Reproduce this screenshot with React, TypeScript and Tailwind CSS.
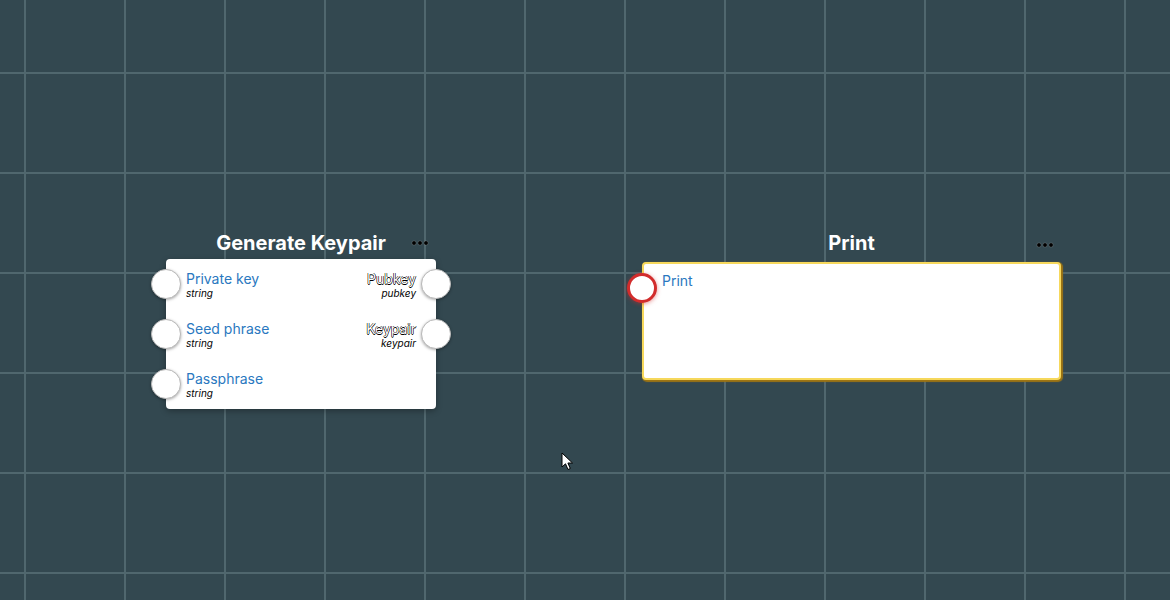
const grid =
  "bg-[#334850] [background-image:linear-gradient(to_right,#50676e_2px,transparent_2px),linear-gradient(to_bottom,#50676e_2px,transparent_2px)] [background-size:100px_100px] [background-position:24px_72px]";

const font = "font-['Inter','Liberation_Sans',sans-serif]";

type Port = { name: string; type?: string };

function Dots() {
  return (
    <div className="absolute right-2 top-1/2 flex -translate-y-1/2 gap-[2px]">
      {[0, 1, 2].map((i) => (
        <span
          key={i}
          className="h-[4px] w-[4px] rounded-full bg-black shadow-[0_0_1px_rgba(255,255,255,0.7)]"
        />
      ))}
    </div>
  );
}

function PortDot({ side, active }: { side: "left" | "right"; active?: boolean }) {
  return (
    <span
      className={
        "absolute top-1/2 h-[30px] w-[30px] -translate-y-1/2 rounded-full bg-white " +
        (side === "left" ? "-left-[15px] " : "-right-[15px] ") +
        (active
          ? "border-[3px] border-[#d22c2c] shadow-[0_1px_4px_rgba(210,44,44,0.5)]"
          : "border border-[#b9b9b9] shadow-[0_1px_3px_rgba(0,0,0,0.35)]")
      }
    />
  );
}

function InputRow({ port, active }: { port: Port; active?: boolean }) {
  return (
    <div className="relative flex h-[50px] flex-col justify-center pl-5">
      <PortDot side="left" active={active} />
      <span className="text-[14px] leading-[17px] text-[#2a78c0]">{port.name}</span>
      {port.type && (
        <span className="text-[10px] italic leading-[12px] text-black">{port.type}</span>
      )}
    </div>
  );
}

function OutputRow({ port }: { port: Port }) {
  return (
    <div className="relative flex h-[50px] flex-col items-end justify-center pr-5">
      <PortDot side="right" />
      <span className="text-[14px] leading-[17px] text-white [text-shadow:0.5px_0_#000,-0.5px_0_#000,0_0.5px_#000,0_-0.5px_#000]">
        {port.name}
      </span>
      <span className="text-[10px] italic leading-[12px] text-black">{port.type}</span>
    </div>
  );
}

function Cursor() {
  return (
    <svg
      className="absolute left-[561px] top-[452px]"
      width="13"
      height="19"
      viewBox="0 0 13 19"
    >
      <path
        d="M1 1 L1 15 L4.5 11.8 L7 17.5 L9.3 16.5 L6.9 11 L11.5 11 Z"
        fill="#fff"
        stroke="#000"
        strokeWidth="1"
        strokeLinejoin="round"
      />
    </svg>
  );
}

export default function App() {
  const inputs: Port[] = [
    { name: "Private key", type: "string" },
    { name: "Seed phrase", type: "string" },
    { name: "Passphrase", type: "string" },
  ];
  const outputs: Port[] = [
    { name: "Pubkey", type: "pubkey" },
    { name: "Keypair", type: "keypair" },
  ];

  return (
    <div className={`relative h-[600px] w-[1170px] overflow-hidden ${grid} ${font}`}>
      {/* Generate Keypair node */}
      <div className="absolute left-[166px] top-[227px] w-[270px]">
        <div className="relative flex h-8 items-center justify-center">
          <h2 className="text-[20px] font-bold leading-none text-white">Generate Keypair</h2>
          <Dots />
        </div>
        <div className="grid grid-cols-2 rounded-[4px] bg-white shadow-[0_2px_6px_rgba(0,0,0,0.3)]">
          <div className="flex flex-col">
            {inputs.map((p) => (
              <InputRow key={p.name} port={p} />
            ))}
          </div>
          <div className="flex flex-col">
            {outputs.map((p) => (
              <OutputRow key={p.name} port={p} />
            ))}
          </div>
        </div>
      </div>

      {/* Print node */}
      <div className="absolute left-[642px] top-[228px] w-[419px]">
        <div className="relative flex h-[34px] items-center justify-center pb-[4px]">
          <h2 className="text-[20px] font-bold leading-none text-white">Print</h2>
          <Dots />
        </div>
        <div className="h-[118px] rounded-[4px] border-2 border-[#f6d85c] bg-white shadow-[1px_1px_1px_1px_#9c7414]">
          <div className="relative flex h-[46px] flex-col justify-start pl-[18px] pt-[8px]">
            <span className="absolute -left-[17px] top-[9px] h-[30px] w-[30px] rounded-full border-[3px] border-[#d22c2c] bg-white shadow-[0_1px_4px_rgba(210,44,44,0.5)]" />
            <span className="text-[14px] leading-[17px] text-[#2a78c0]">Print</span>
          </div>
        </div>
      </div>

      <Cursor />
    </div>
  );
}
